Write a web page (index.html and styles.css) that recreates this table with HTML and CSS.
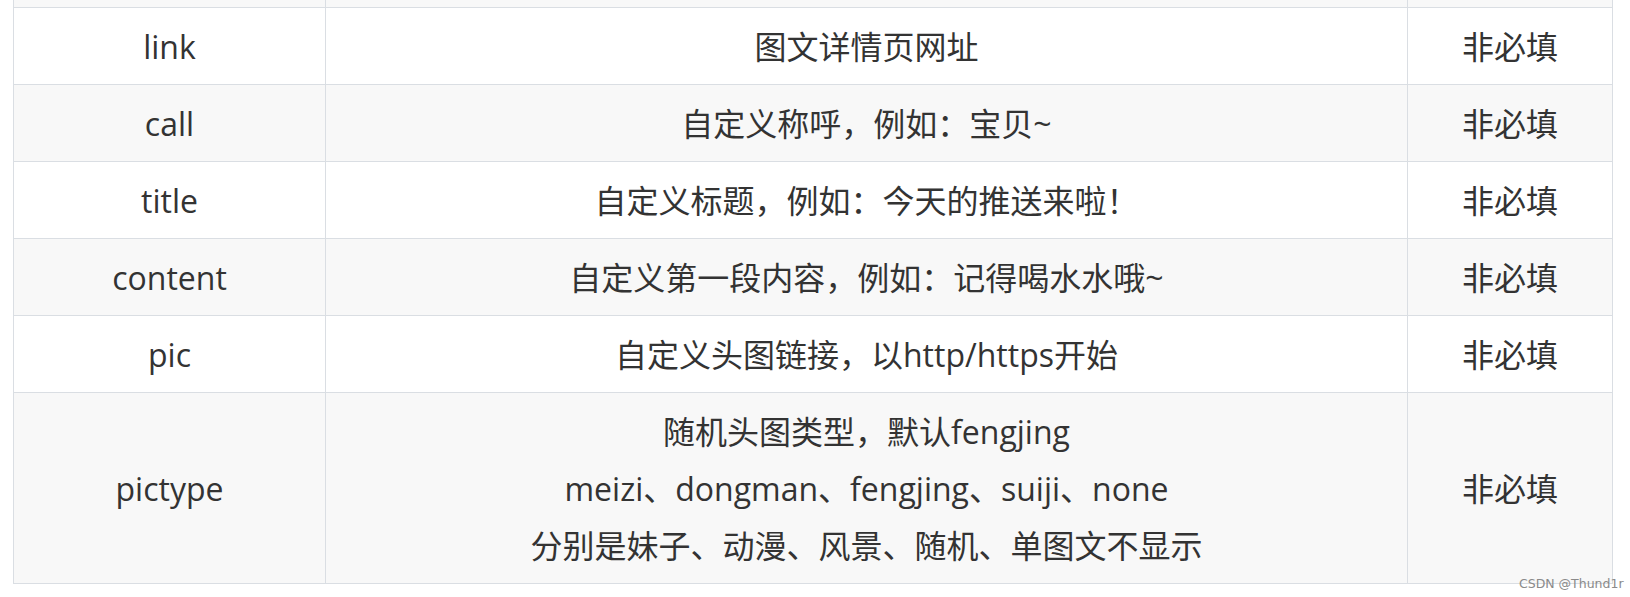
FILE: index.html
```html
<!DOCTYPE html>
<html lang="zh-CN">
<head>
<meta charset="utf-8">
<title>参数表</title>
<link rel="stylesheet" href="styles.css">
</head>
<body>
<div class="page">
  <table class="params">
    <colgroup>
      <col class="c-name">
      <col class="c-desc">
      <col class="c-req">
    </colgroup>
    <tbody>
      <tr class="stub"><td></td><td></td><td></td></tr>
      <tr><td>link</td><td>图文详情页网址</td><td>非必填</td></tr>
      <tr><td>call</td><td>自定义称呼，例如：宝贝~</td><td>非必填</td></tr>
      <tr><td>title</td><td>自定义标题，例如：今天的推送来啦！</td><td>非必填</td></tr>
      <tr><td>content</td><td>自定义第一段内容，例如：记得喝水水哦~</td><td>非必填</td></tr>
      <tr><td>pic</td><td>自定义头图链接，以http/https开始</td><td>非必填</td></tr>
      <tr><td>pictype</td><td>随机头图类型，默认fengjing<br>meizi、dongman、fengjing、suiji、none<br>分别是妹子、动漫、风景、随机、单图文不显示</td><td>非必填</td></tr>
    </tbody>
  </table>
  <div class="watermark">CSDN @Thund1r</div>
</div>
</body>
</html>
```

FILE: styles.css
```css
html, body {
  margin: 0;
  padding: 0;
  background: #ffffff;
}

.page {
  position: relative;
  width: 1630px;
  height: 597px;
  overflow: hidden;
  padding-left: 13px;
  box-sizing: border-box;
}

.params {
  border-collapse: collapse;
  table-layout: fixed;
  width: 1599px;
  font-family: "Open Sans", "Noto Sans CJK SC", sans-serif;
  font-size: 32px;
  color: #333333;
}

.c-name { width: 312px; }
.c-desc { width: 1082px; }
.c-req { width: 205px; }

.params td {
  border: 1px solid #dadee3;
  padding: 9.5px 10px;
  line-height: 57px;
  text-align: center;
  vertical-align: middle;
}

.params tr:nth-child(odd) td {
  background: #f8f8f8;
}

.params tr:nth-child(even) td {
  background: #ffffff;
}

.params tr.stub td {
  height: 7px;
  padding: 0;
  line-height: 0;
  border-top: none;
}

.watermark {
  position: absolute;
  left: 1519px;
  top: 576px;
  font-family: "DejaVu Sans", sans-serif;
  font-size: 12.5px;
  color: #8a8a8a;
  white-space: nowrap;
}
```
